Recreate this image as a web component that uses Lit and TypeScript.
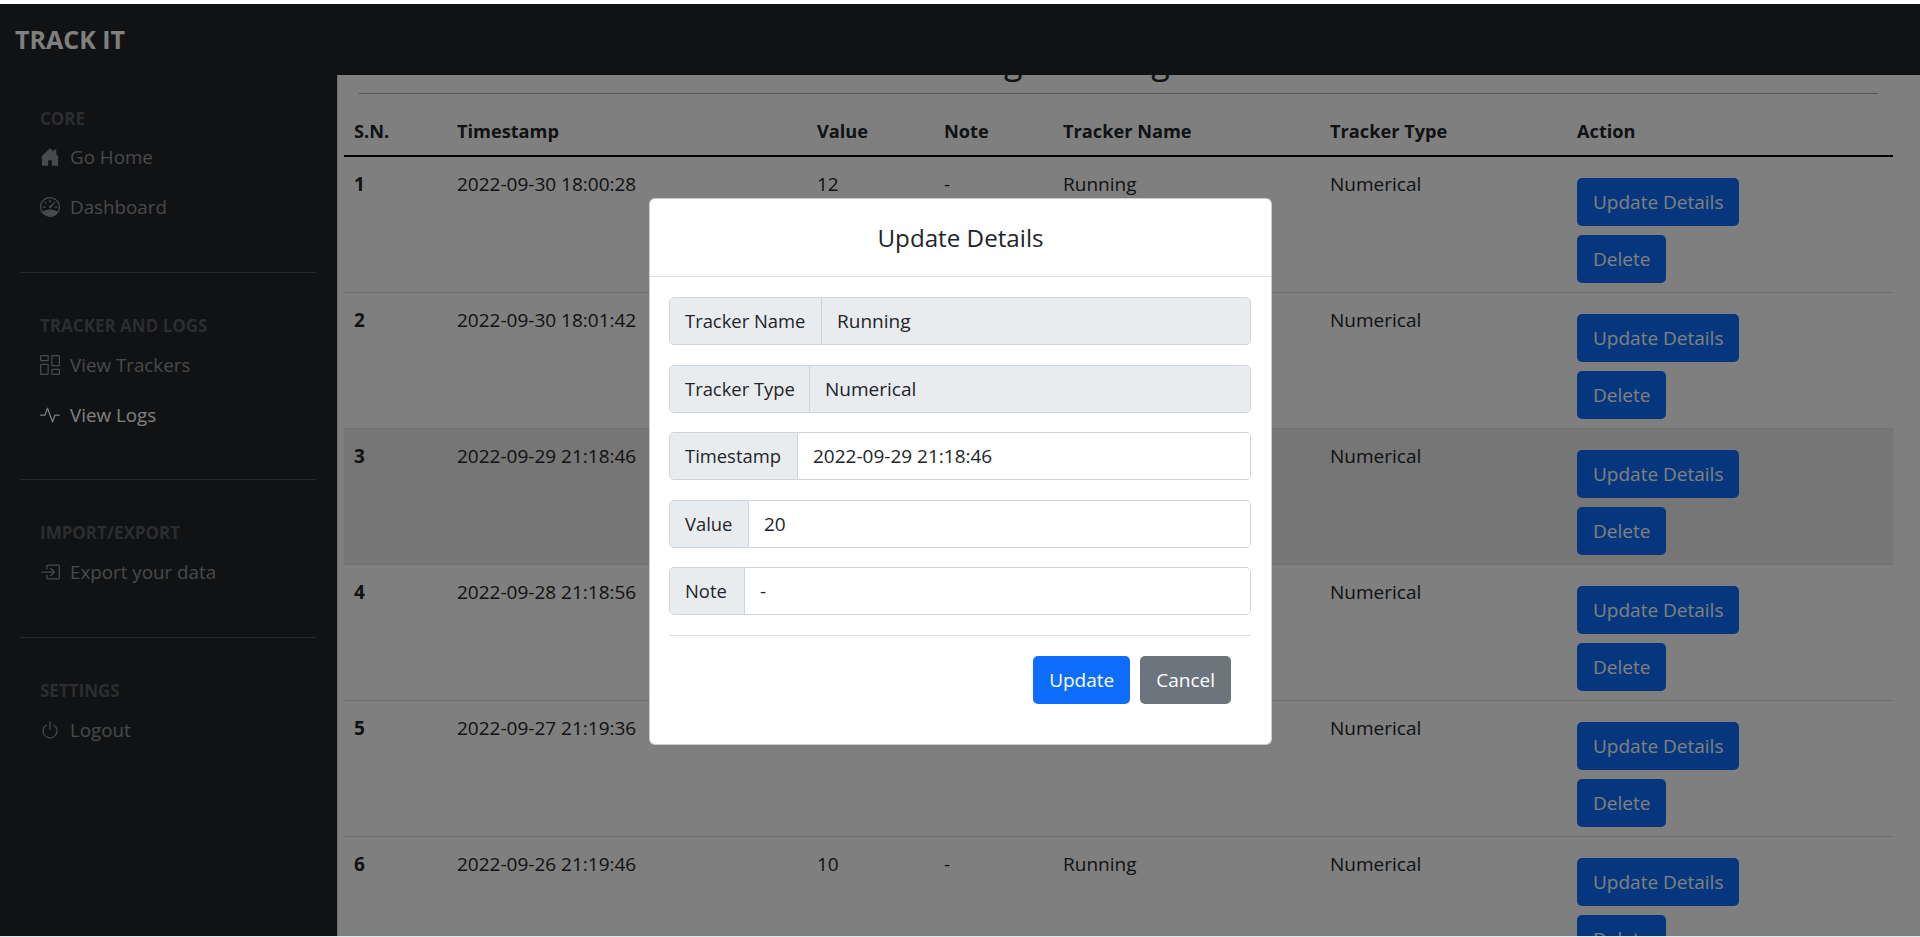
import { LitElement, html, css, svg } from "lit";
import { customElement } from "lit/decorators.js";

const icons = {
  home: svg`<path d="M6.5 14.5v-3.505c0-.245.25-.495.5-.495h2c.25 0 .5.25.5.5v3.5a.5.5 0 0 0 .5.5h4a.5.5 0 0 0 .5-.5v-7a.5.5 0 0 0-.146-.354L13 5.793V2.5a.5.5 0 0 0-.5-.5h-1a.5.5 0 0 0-.5.5v1.293L8.354 1.146a.5.5 0 0 0-.708 0l-6 6A.5.5 0 0 0 1.5 7.5v7a.5.5 0 0 0 .5.5h4a.5.5 0 0 0 .5-.5z"/>`,
  speed: svg`<path d="M8 2a.5.5 0 0 1 .5.5V4a.5.5 0 0 1-1 0V2.5A.5.5 0 0 1 8 2zM3.732 3.732a.5.5 0 0 1 .707 0l.915.914a.5.5 0 1 1-.708.708l-.914-.915a.5.5 0 0 1 0-.707zM2 8a.5.5 0 0 1 .5-.5h1.586a.5.5 0 0 1 0 1H2.5A.5.5 0 0 1 2 8zm9.5 0a.5.5 0 0 1 .5-.5h1.5a.5.5 0 0 1 0 1H12a.5.5 0 0 1-.5-.5zm.754-4.246a.389.389 0 0 0-.527-.02L7.547 7.31A.91.91 0 1 0 8.85 8.569l3.434-4.297a.389.389 0 0 0-.029-.518z"/><path fill-rule="evenodd" d="M6.664 15.889A8 8 0 1 1 9.336.11a8 8 0 0 1-2.672 15.78zm-4.665-4.283A11.945 11.945 0 0 1 8 10c2.186 0 4.236.585 6.001 1.606a7 7 0 1 0-12.002 0z"/>`,
  grid: svg`<path d="M6 1v3H1V1h5zM1 0a1 1 0 0 0-1 1v3a1 1 0 0 0 1 1h5a1 1 0 0 0 1-1V1a1 1 0 0 0-1-1H1zm14 12v3h-5v-3h5zm-5-1a1 1 0 0 0-1 1v3a1 1 0 0 0 1 1h5a1 1 0 0 0 1-1v-3a1 1 0 0 0-1-1h-5zM6 8v7H1V8h5zM1 7a1 1 0 0 0-1 1v7a1 1 0 0 0 1 1h5a1 1 0 0 0 1-1V8a1 1 0 0 0-1-1H1zm14-6v7h-5V1h5zm-5-1a1 1 0 0 0-1 1v7a1 1 0 0 0 1 1h5a1 1 0 0 0 1-1V1a1 1 0 0 0-1-1h-5z"/>`,
  activity: svg`<path fill-rule="evenodd" d="M6 2a.5.5 0 0 1 .47.33L10 12.036l1.53-4.208A.5.5 0 0 1 12 7.5h3.5a.5.5 0 0 1 0 1h-3.15l-1.88 5.17a.5.5 0 0 1-.94 0L6 3.964 4.47 8.171A.5.5 0 0 1 4 8.5H.5a.5.5 0 0 1 0-1h3.15l1.88-5.17A.5.5 0 0 1 6 2Z"/>`,
  exportIn: svg`<path fill-rule="evenodd" d="M6 3.5a.5.5 0 0 1 .5-.5h8a.5.5 0 0 1 .5.5v9a.5.5 0 0 1-.5.5h-8a.5.5 0 0 1-.5-.5v-2a.5.5 0 0 0-1 0v2A1.5 1.5 0 0 0 6.5 14h8a1.5 1.5 0 0 0 1.5-1.5v-9A1.5 1.5 0 0 0 14.5 2h-8A1.5 1.5 0 0 0 5 3.5v2a.5.5 0 0 0 1 0v-2z"/><path fill-rule="evenodd" d="M11.854 8.354a.5.5 0 0 0 0-.708l-3-3a.5.5 0 1 0-.708.708L10.293 7.5H1.5a.5.5 0 0 0 0 1h8.793l-2.147 2.146a.5.5 0 0 0 .708.708l3-3z"/>`,
  power: svg`<path d="M7.5 1v7h1V1h-1z"/><path d="M3 8.812a4.999 4.999 0 0 1 2.578-4.375l-.485-.874A6 6 0 1 0 11 3.616l-.501.865A5 5 0 1 1 3 8.812z"/>`,
};

const sections = [
  {
    title: "CORE",
    links: [
      { label: "Go Home", icon: icons.home },
      { label: "Dashboard", icon: icons.speed },
    ],
  },
  {
    title: "TRACKER AND LOGS",
    links: [
      { label: "View Trackers", icon: icons.grid },
      { label: "View Logs", icon: icons.activity, active: true },
    ],
  },
  {
    title: "IMPORT/EXPORT",
    links: [{ label: "Export your data", icon: icons.exportIn }],
  },
  {
    title: "SETTINGS",
    links: [{ label: "Logout", icon: icons.power }],
  },
];

const logs = [
  { sn: 1, time: "2022-09-30 18:00:28", value: "12" },
  { sn: 2, time: "2022-09-30 18:01:42", value: "15" },
  { sn: 3, time: "2022-09-29 21:18:46", value: "20", hover: true },
  { sn: 4, time: "2022-09-28 21:18:56", value: "18" },
  { sn: 5, time: "2022-09-27 21:19:36", value: "14" },
  { sn: 6, time: "2022-09-26 21:19:46", value: "10" },
];

const fields = [
  { label: "Tracker Name", value: "Running", width: 152, disabled: true },
  { label: "Tracker Type", value: "Numerical", width: 140, disabled: true },
  { label: "Timestamp", value: "2022-09-29 21:18:46", width: 128 },
  { label: "Value", value: "20", width: 79 },
  { label: "Note", value: "-", width: 75 },
];

@customElement("app-root")
export class AppRoot extends LitElement {
  render() {
    return html`
      <div class="frame">
        <header class="topnav">TRACK IT</header>
        <div class="layout">
          <nav class="sidenav">
            ${sections.map(
              (s, i) => html`
                ${i > 0 ? html`<div class="side-rule"></div>` : ""}
                <div class="side-section ${s.links.length === 1 ? "single" : ""}">
                  <div class="side-heading">${s.title}</div>
                  ${s.links.map(
                    (l: any) => html`
                      <a class="side-link ${l.active ? "active" : ""}">
                        <svg viewBox="0 0 16 16" width="20" height="20" fill="currentColor">${l.icon}</svg>
                        ${l.label}
                      </a>
                    `
                  )}
                </div>
              `
            )}
          </nav>
          <main class="content">
            <h2 class="page-title">Logs Viewing Data</h2>
            <hr class="title-rule" />
            <table>
              <colgroup>
                <col class="c-sn" /><col class="c-time" /><col class="c-value" /><col class="c-note" />
                <col class="c-name" /><col class="c-type" /><col />
              </colgroup>
              <thead>
                <tr>
                  <th>S.N.</th><th>Timestamp</th><th>Value</th><th>Note</th>
                  <th>Tracker Name</th><th>Tracker Type</th><th>Action</th>
                </tr>
              </thead>
              <tbody>
                ${logs.map(
                  (r) => html`
                    <tr class=${r.hover ? "hover" : ""}>
                      <th>${r.sn}</th>
                      <td>${r.time}</td>
                      <td>${r.value}</td>
                      <td>-</td>
                      <td>Running</td>
                      <td>Numerical</td>
                      <td class="actions">
                        <a class="btn primary">Update Details</a>
                        <a class="btn primary">Delete</a>
                      </td>
                    </tr>
                  `
                )}
              </tbody>
            </table>
          </main>
        </div>
        <div class="backdrop">
          <section class="modal">
            <div class="modal-header"><h5>Update Details</h5></div>
            <div class="modal-body">
              ${fields.map(
                (f) => html`
                  <div class="input-group">
                    <span class="addon" style="width:${f.width}px">${f.label}</span>
                    <span class="control ${f.disabled ? "disabled" : ""}">${f.value}</span>
                  </div>
                `
              )}
              <hr class="form-rule" />
              <div class="form-actions">
                <a class="btn primary">Update</a>
                <a class="btn secondary">Cancel</a>
              </div>
            </div>
          </section>
        </div>
      </div>
    `;
  }

  static styles = css`
    :host {
      display: block;
      height: 937px;
      overflow: hidden;
      background: #fff;
      font-family: "Open Sans", "Noto Sans", sans-serif;
      font-size: 19px;
      line-height: 30px;
      color: #212529;
    }

    .frame {
      position: relative;
      box-sizing: border-box;
      height: 932px;
      margin-top: 4px;
      display: flex;
      flex-direction: column;
      overflow: hidden;
      box-shadow: 0 1px 0 #dde6e8;
    }

    .topnav {
      flex: 0 0 71px;
      box-sizing: border-box;
      padding: 0 15px;
      background: #212529;
      color: #fff;
      font-size: 25px;
      font-weight: 700;
      line-height: 71px;
      position: relative;
      z-index: 1;
    }

    .layout {
      flex: 1;
      display: flex;
      min-height: 0;
    }

    .sidenav {
      flex: 0 0 337px;
      box-sizing: border-box;
      padding-top: 32px;
      background: #212529;
      color: rgba(255, 255, 255, 0.5);
      font-size: 18.8px;
    }

    .side-section {
      display: flex;
      flex-direction: column;
    }

    .side-section:first-child {
      padding-bottom: 1px;
    }

    .side-section:first-child .side-heading {
      margin-bottom: 2px;
    }

    .side-section.single {
      padding-bottom: 1px;
    }

    .side-heading {
      padding: 0 40px;
      height: 23px;
      font-size: 17px;
      line-height: 23px;
      font-weight: 700;
      color: rgba(255, 255, 255, 0.25);
      margin-bottom: 3px;
    }

    .side-link {
      display: flex;
      align-items: center;
      gap: 10px;
      height: 50px;
      padding: 0 40px;
      box-sizing: border-box;
    }

    .side-link svg {
      flex: none;
    }

    .side-link.active {
      color: #fff;
    }

    .side-rule {
      height: 1px;
      margin: 39px 21px 41px 20px;
      background: rgba(255, 255, 255, 0.2);
    }

    .content {
      flex: 1;
      min-width: 0;
      padding: 0 27px 0 6px;
      overflow: hidden;
      background: #fff;
      border-left: 1px solid #d8d8d8;
    }

    .page-title {
      margin: -38px 0 0;
      height: 48px;
      padding-right: 18px;
      font-size: 34px;
      line-height: 48px;
      font-weight: 500;
      text-align: center;
      color: #212529;
    }

    .title-rule {
      margin: 8px 15px 0 15px;
      border: 0;
      height: 1px;
      background: #a8a8a8;
    }

    table {
      width: 1549px;
      margin-top: 12px;
      border-collapse: collapse;
      table-layout: fixed;
    }

    .c-sn { width: 103px; }
    .c-time { width: 360px; }
    .c-value { width: 127px; }
    .c-note { width: 119px; }
    .c-name { width: 267px; }
    .c-type { width: 247px; }

    thead th {
      height: 50px;
      box-sizing: border-box;
      padding: 0 10px;
      text-align: left;
      font-size: 18.2px;
      font-weight: 700;
      border-bottom: 2px solid #000;
    }

    tbody tr {
      height: 136px;
      border-bottom: 1px solid #dee2e6;
    }

    tbody tr.hover {
      background: rgba(0, 0, 0, 0.075);
    }

    tbody th,
    tbody td {
      box-sizing: border-box;
      padding: 12px 10px 0;
      vertical-align: top;
      text-align: left;
    }

    tbody th {
      font-weight: 700;
    }

    tbody td.actions {
      padding-top: 21px;
    }

    .btn {
      display: block;
      width: fit-content;
      box-sizing: border-box;
      height: 48px;
      padding: 0 16px;
      line-height: 48px;
      border-radius: 5px;
      color: #fff;
    }

    .btn.primary {
      background: #0d6efd;
    }

    .btn.secondary {
      background: #6c757d;
    }

    .actions .btn + .btn {
      margin-top: 9px;
    }

    .backdrop {
      position: absolute;
      inset: 0;
      z-index: 2;
      display: flex;
      justify-content: center;
      align-items: flex-start;
      background: rgba(0, 0, 0, 0.5);
    }

    .modal {
      width: 623px;
      margin: 194px 0 0 1px;
      background: #fff;
      border: 1px solid rgba(0, 0, 0, 0.2);
      border-radius: 6px;
      box-sizing: border-box;
    }

    .modal-header {
      height: 78px;
      box-sizing: border-box;
      border-bottom: 1px solid #dee2e6;
      display: flex;
      align-items: center;
      justify-content: center;
    }

    .modal-header h5 {
      margin: 0;
      font-size: 24.2px;
      font-weight: 500;
      line-height: 30px;
    }

    .modal-body {
      padding: 20px 20px 40px 19px;
    }

    .input-group {
      display: flex;
      height: 48px;
      box-sizing: border-box;
      border: 1px solid #ced4da;
      border-radius: 5px;
      overflow: hidden;
      margin-bottom: 19.5px;
    }

    .addon {
      box-sizing: border-box;
      flex: none;
      padding: 0 15px;
      background: #e9ecef;
      border-right: 1px solid #ced4da;
      font-size: 18.4px;
      line-height: 46px;
      white-space: nowrap;
    }

    .control {
      flex: 1;
      padding: 0 15px;
      line-height: 46px;
      background: #fff;
    }

    .control.disabled {
      background: #e9ecef;
    }

    .form-rule {
      margin: 0 0 20px;
      border: 0;
      height: 1px;
      background: #dfdfdf;
    }

    .form-actions {
      display: flex;
      justify-content: flex-end;
      gap: 10px;
      padding-right: 20px;
    }
  `;
}
